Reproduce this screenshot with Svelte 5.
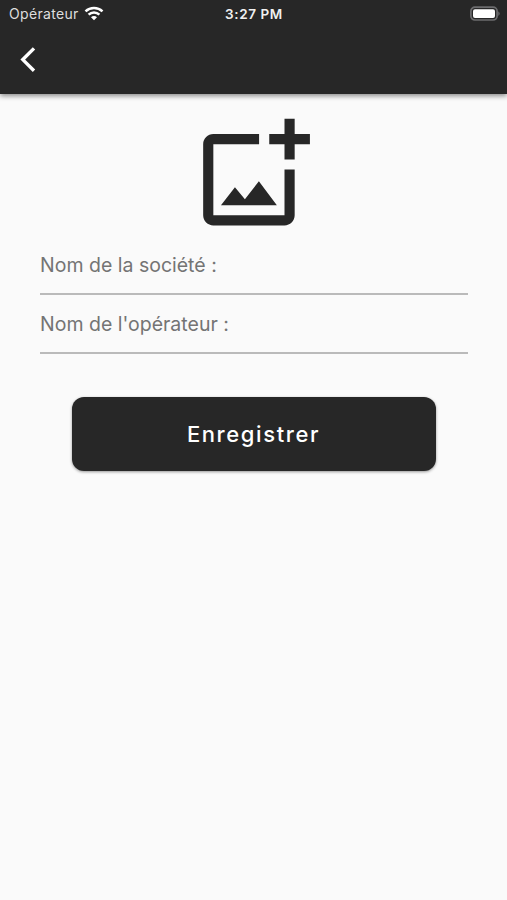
<script>
  const fields = ['Nom de la société :', "Nom de l'opérateur :"];
</script>

<div class="screen">
  <header>
    <div class="status">
      <div class="carrier">
        <span>Opérateur</span>
        <svg width="20" height="15" viewBox="0 0 20 15" fill="none" stroke="#fff" stroke-width="2.5">
          <path d="M1.5 5.4a12.4 12.4 0 0 1 17 0" />
          <path d="M4.6 8.7a7.8 7.8 0 0 1 10.8 0" />
          <path d="M10 14.2 7 11.3a4.2 4.2 0 0 1 6 0Z" fill="#fff" stroke="none" />
        </svg>
      </div>
      <div class="time">3:27 PM</div>
      <div class="battery">
        <svg width="32" height="16" viewBox="0 0 32 16">
          <rect x="1.9" y="1.2" width="26.2" height="12.8" rx="4" fill="none" stroke="#6c6c6e" stroke-width="1.7" />
          <rect x="4" y="3.2" width="22" height="8.8" rx="2" fill="#fff" />
          <path d="M29.4 5.2q2.4 2.4 0 4.8Z" fill="#77777a" />
        </svg>
      </div>
    </div>
    <button class="back" aria-label="Retour">
      <svg width="16" height="26" viewBox="0 0 16 26" fill="none" stroke="#fff" stroke-width="3.4">
        <path d="M14 1.4 2.8 12.6 14 23.8" />
      </svg>
    </button>
  </header>

  <main>
    <svg class="photo" viewBox="0 0.06 24 24" fill="#272727">
      <path d="M18 20H4V6h9V4H4c-1.1 0-2 .9-2 2v14c0 1.1.9 2 2 2h14c1.1 0 2-.9 2-2v-9h-2v9zm-7.79-3.17-1.96-2.36L5.5 18h11l-3.54-4.71zM20 4V1h-2v3h-3v2h3v3h2V6h3V4h-3z" />
    </svg>
    <div class="fields">
      {#each fields as label}
        <div class="field"><span>{label}</span></div>
      {/each}
    </div>
    <button class="save">Enregistrer</button>
  </main>
</div>

<style>
  :global(body) { margin: 0; background: #fafafa; }
  .screen {
    width: 507px;
    height: 900px;
    overflow: hidden;
    background: #fafafa;
    font-family: Inter, "Liberation Sans", sans-serif;
  }
  button { border: 0; padding: 0; font-family: inherit; }
  svg { display: block; }
  header {
    height: 93.5px;
    background: #272727;
    box-shadow: 0 2px 5px rgba(0, 0, 0, 0.45);
  }
  .status {
    display: grid;
    grid-template-columns: 1fr auto 1fr;
    align-items: center;
    height: 27px;
    color: #fff;
    font-size: 13.5px;
  }
  .carrier { display: flex; align-items: center; gap: 5px; padding-left: 9px; color: #dedede; font-size: 14px; letter-spacing: 0.32px; }
  .time { padding-left: 1px; font-weight: 600; color: #f0f0f0; letter-spacing: 0.6px; }
  .battery { display: flex; justify-content: flex-end; padding-right: 6px; }
  .back { display: block; margin: 20px 0 0 20px; background: none; }
  main { display: flex; flex-direction: column; align-items: center; padding-top: 20.5px; }
  .photo { width: 122px; height: 122px; margin-left: 1px; }
  .fields { width: 428px; }
  .field {
    display: flex;
    align-items: center;
    box-sizing: border-box;
    height: 59px;
    padding: 1px 0 0 0.5px;
    border-bottom: 2px solid #bababa;
    color: #747474;
    font-size: 19.5px;
  }
  .save {
    width: 364px;
    height: 74px;
    margin-top: 43px;
    border-radius: 12px;
    background: #272727;
    box-shadow: 0 1px 3px rgba(0, 0, 0, 0.4);
    color: #fff;
    font-size: 22px;
    font-weight: 500;
    letter-spacing: 1.6px;
  }
</style>
